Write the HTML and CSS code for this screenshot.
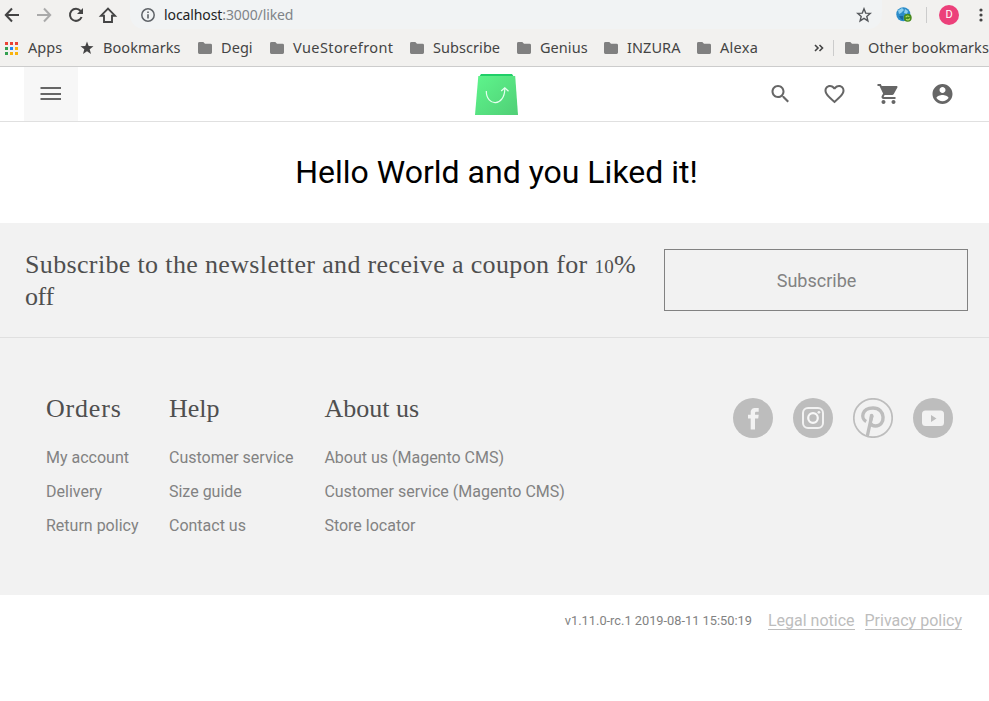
FILE: index.html
```html
<!DOCTYPE html>
<html lang="en">
<head>
<meta charset="utf-8">
<title>Liked</title>
<link rel="stylesheet" href="styles.css">
</head>
<body>
<svg class="defs" width="0" height="0"><defs>
<symbol id="folder" viewBox="0 0 14 12"><path d="M1.5 0H5.3L7 1.8H12.6Q14 1.8 14 3.2V10.6Q14 12 12.6 12H1.4Q0 12 0 10.6V1.4Q0 0 1.5 0Z" fill="#808080"/></symbol>
</defs></svg>
<div class="browser">
  <div class="toolbar">
    <svg class="nav" viewBox="0 0 120 30" fill="none" stroke="#444" stroke-width="2">
      <path d="M19 15H6M12 8.5 5.8 15 12 21.500"/>
      <path d="M37 15H50M44 8.500 50.200 15 44 21.500" stroke="#aaa"/>
      <path d="M80.600 11A6 6 0 1 0 81.600 17"/><path d="M83 8V14H77Z" fill="#444" stroke="none"/>
      <path d="M101 15.700H104V22H112V15.700H115L108 8.700Z" stroke-width="1.900"/>
    </svg>
    <div class="omnibox">
      <svg class="info" viewBox="0 0 16 16"><circle cx="8" cy="8" r="6.200" fill="none" stroke="#5f6368" stroke-width="1.500"/><path d="M8 7.200V11.500M8 4.500V6" stroke="#5f6368" stroke-width="1.600"/></svg>
      <span class="url"><b>localhost</b>:3000/liked</span>
      <svg class="star" viewBox="0 0 16 16"><path d="M8 1.800 9.700 6.100 14.300 6.400 10.800 9.400 11.900 13.900 8 11.400 4.100 13.900 5.200 9.400 1.700 6.400 6.300 6.100Z" fill="none" stroke="#55585c" stroke-width="1.400"/></svg>
    </div>
    <svg class="globe" viewBox="0 0 16 16"><circle cx="7.300" cy="7.300" r="7" fill="#2c8cc9"/><path d="M2 3.500 6 1 8 3 5 6 3 7ZM9 2 12 4 11 7 8 6Z" fill="#8ed0ef"/><path d="M3 9 7 9 7 13 5 12Z" fill="#1766a0"/><circle cx="11.700" cy="10.800" r="4" fill="#47891c"/><path d="M9.800 10.300A2 2 0 0 1 13.300 9.800M13.700 11.500A2 2 0 0 1 10.200 12.100" fill="none" stroke="#b8e36b" stroke-width="1.100"/></svg>
    <span class="rule"></span>
    <span class="avatar">D</span>
    <svg class="dots" viewBox="0 0 4 14" fill="#444"><circle cx="2" cy="2" r="1.600"/><circle cx="2" cy="7" r="1.600"/><circle cx="2" cy="12" r="1.600"/></svg>
  </div>
  <div class="bookmarks">
    <span class="bm"><svg class="apps" viewBox="0 0 13 13"><path d="M0 0h3v3H0zM5 0h3v3H5zM10 0h3v3h-3z" fill="#ea4335"/><path d="M0 5h3v3H0zM0 10h3v3H0z" fill="#34a050"/><path d="M5 5h3v3H5z" fill="#2486f5"/><path d="M10 5h3v3h-3zM5 10h3v3H5zM10 10h3v3h-3z" fill="#f9b20c"/></svg><span>Apps</span></span>
    <span class="bm"><svg class="bstar" viewBox="0 0 14 14"><path d="M7 .5 8.700 5.100 13.500 5.300 9.700 8.300 11 13 7 10.300 3 13 4.300 8.300 .5 5.300 5.300 5.100Z" fill="#444"/></svg><span>Bookmarks</span></span>
    <span class="bm"><svg><use href="#folder"/></svg><span>Degi</span></span>
    <span class="bm"><svg><use href="#folder"/></svg><span class="vue">VueStorefront</span></span>
    <span class="bm"><svg><use href="#folder"/></svg><span>Subscribe</span></span>
    <span class="bm"><svg><use href="#folder"/></svg><span>Genius</span></span>
    <span class="bm"><svg><use href="#folder"/></svg><span>INZURA</span></span>
    <span class="bm"><svg><use href="#folder"/></svg><span class="alexa">Alexa</span></span>
    <svg class="more" viewBox="0 0 10 8"><path d="M1 1 4 4 1 7M5.500 1 8.500 4 5.500 7" fill="none" stroke="#444" stroke-width="1.600"/></svg>
    <span class="rule"></span>
    <span class="bm"><svg><use href="#folder"/></svg><span>Other bookmarks</span></span>
  </div>
</div>
<header class="header">
  <button class="menu" aria-label="Menu"><svg viewBox="0 0 24 24"><path d="M1.500 6H22M1.500 12H22M1.500 17H22" stroke="#666" stroke-width="2" fill="none"/></svg></button>
  <svg class="logo" viewBox="0 0 44 42"><defs><linearGradient id="bag" x1="0" y1="0" x2="1" y2="1"><stop offset="0" stop-color="#5ef58c"/><stop offset="1" stop-color="#50cf76"/></linearGradient></defs><path d="M6 0H37L39 3H4Z" fill="#20cf68"/><path d="M3.300 2H40.200L43 41H0Z" fill="url(#bag)"/><path d="M11.300 17C11.300 33 29.800 33 29.800 14.500M26.200 17 29.800 13.700 33.500 17.200" fill="none" stroke="#e6fff0" stroke-width="1.200"/></svg>
  <nav class="actions">
    <svg viewBox="0 0 24 24"><path d="M15.500 14h-.79l-.28-.27C15.410 12.590 16 11.110 16 9.500 16 5.910 13.090 3 9.500 3S3 5.910 3 9.500 5.910 16 9.500 16c1.610 0 3.090-.59 4.230-1.570l.27.28v.79l5 4.990L20.490 19l-4.990-5zm-6 0C7.010 14 5 11.990 5 9.500S7.010 5 9.500 5 14 7.010 14 9.500 11.990 14 9.500 14z"/></svg>
    <svg viewBox="0 0 24 24"><path d="M16.500 3c-1.740 0-3.410.81-4.500 2.090C10.910 3.810 9.240 3 7.500 3 4.420 3 2 5.420 2 8.500c0 3.780 3.400 6.860 8.550 11.540L12 21.350l1.450-1.320C18.600 15.360 22 12.280 22 8.500 22 5.420 19.580 3 16.500 3zm-4.400 15.550l-.1.100-.1-.1C7.140 14.240 4 11.390 4 8.500 4 6.500 5.500 5 7.500 5c1.540 0 3.040.99 3.570 2.360h1.870C13.460 5.990 14.960 5 16.500 5c2 0 3.500 1.500 3.500 3.500 0 2.890-3.140 5.740-7.900 10.050z"/></svg>
    <svg viewBox="0 0 24 24"><path d="M7 18c-1.100 0-1.990.9-1.990 2S5.900 22 7 22s2-.9 2-2-.9-2-2-2zM1 2v2h2l3.600 7.590-1.350 2.450c-.16.280-.25.610-.25.960 0 1.100.9 2 2 2h12v-2H7.420c-.14 0-.25-.11-.25-.25l.03-.12.900-1.630h7.450c.75 0 1.410-.41 1.750-1.030l3.580-6.490c.08-.14.120-.31.120-.48 0-.55-.45-1-1-1H5.210l-.94-2H1zm16 16c-1.100 0-1.990.9-1.990 2s.89 2 1.990 2 2-.9 2-2-.9-2-2-2z"/></svg>
    <svg viewBox="0 0 24 24"><path d="M12 2C6.480 2 2 6.480 2 12s4.480 10 10 10 10-4.480 10-10S17.520 2 12 2zm0 3c1.660 0 3 1.340 3 3s-1.340 3-3 3-3-1.340-3-3 1.340-3 3-3zm0 14.200c-2.500 0-4.710-1.280-6-3.220.03-1.990 4-3.080 6-3.080 1.990 0 5.970 1.090 6 3.080-1.290 1.940-3.500 3.220-6 3.220z"/></svg>
  </nav>
</header>
<main><h1>Hello World and you Liked it!</h1></main>
<section class="newsletter">
  <h2>Subscribe to the newsletter and receive a coupon for <span class="num">10</span>% <span class="off">off</span></h2>
  <button class="subscribe">Subscribe</button>
</section>
<footer>
  <div class="links">
    <div class="col"><h3 class="orders">Orders</h3><a>My account</a><a>Delivery</a><a>Return policy</a></div>
    <div class="col help"><h3>Help</h3><a>Customer service</a><a>Size guide</a><a>Contact us</a></div>
    <div class="col"><h3>About us</h3><a>About us (Magento CMS)</a><a>Customer service (Magento CMS)</a><a>Store locator</a></div>
    <div class="social">
      <svg viewBox="0 0 40 40"><circle cx="20" cy="20" r="20" fill="#bdbdbd"/><path d="M17.700 31.500V20.500H15V16.800H17.700V14.500C17.700 11.200 19.700 10 22.300 10H25.700V13.700H23.500C22.300 13.700 22 14.200 22 15.200V16.800H25.700L25.200 20.500H22V31.500Z" fill="#f2f2f2"/></svg>
      <svg viewBox="0 0 40 40"><circle cx="20" cy="20" r="20" fill="#bdbdbd"/><rect x="10" y="10" width="20" height="20" rx="5" fill="none" stroke="#f2f2f2" stroke-width="2"/><circle cx="20" cy="20" r="4.800" fill="none" stroke="#f8f8f8" stroke-width="2.200"/><circle cx="25.900" cy="14.300" r="1.400" fill="#f2f2f2"/></svg>
      <svg viewBox="0 0 40 40"><circle cx="20" cy="20" r="19.200" fill="none" stroke="#bdbdbd" stroke-width="1.700"/><path d="M13.200 23.500C7.500 20.500 8.500 10 20 10C33 10 33 28 22.500 28C19.500 28 18 26.500 17.300 24.800M18.700 18L14.300 38" fill="none" stroke="#bdbdbd" stroke-width="3.400"/><path d="M16.900 16.500Q19.900 14.700 20.700 18L18.700 25H16Z" fill="#bdbdbd"/></svg>
      <svg viewBox="0 0 40 40"><circle cx="20" cy="20" r="20" fill="#bdbdbd"/><rect x="9" y="12.500" width="22" height="15.500" rx="3.500" fill="#f2f2f2"/><path d="M18 17V24L23.500 20.500Z" fill="#bdbdbd"/></svg>
    </div>
  </div>
</footer>
<div class="legal"><span class="version">v1.11.0-rc.1 2019-08-11 15:50:19</span><a>Legal notice</a><a>Privacy policy</a></div>
</body>
</html>
```
FILE: styles.css
```css
* { box-sizing: border-box; }
body { margin: 0; background: #fff; font-family: Roboto, sans-serif; color: #828282; overflow: hidden; height: 701px; }
h1, h2, h3 { margin: 0; font-weight: 400; }
svg { display: block; flex: none; }
.defs { position: absolute; }
.browser { height: 67px; background: #f2f1ef; border-bottom: 1px solid #ccc; font-family: "Noto Sans", sans-serif; overflow: hidden; }
.toolbar { height: 29px; display: flex; align-items: center; }
.nav { width: 120px; height: 30px; }
.omnibox { margin-left: 10px; width: 752px; height: 29px; background: #f1f3f4; border-radius: 0 0 14px 14px; display: flex; align-items: center; padding: 0 10px; }
.info, .star { width: 16px; height: 16px; }
.url { margin-left: 8px; font-size: 14px; letter-spacing: -.1px; color: #808488; }
.url b { font-weight: 400; color: #222; }
.star { margin-left: auto; }
.globe { width: 16px; height: 16px; margin-left: 14px; }
.rule { width: 1px; height: 16px; background: #ccc; }
.toolbar .rule { margin-left: 14px; }
.avatar { margin-left: 12px; width: 20px; height: 20px; border-radius: 50%; background: #ec407a; color: #fff; font: 11px/20px Roboto, sans-serif; text-align: center; }
.dots { width: 4px; height: 14px; margin-left: 20px; }
.bookmarks { height: 38px; padding-left: 5px; display: grid; grid-template-columns: 75px 118px 72px 140px 107px 87px 93px 117px 19px 12px 144px; align-items: center; color: #444; }
.bm { display: flex; align-items: center; white-space: nowrap; font-size: 14.5px; letter-spacing: .06px; line-height: 20px; }
.bm span { margin-top: -2px; }
.bm .vue { letter-spacing: .4px; }
.bm .alexa { letter-spacing: .3px; }
.bm svg { width: 14px; height: 12px; margin-right: 9px; }
.bm .apps { width: 13px; height: 13px; margin-right: 10px; }
.bm .bstar { height: 14px; }
.more { width: 10px; height: 8px; }
.header { height: 55px; border-bottom: 1px solid #e0e0e0; display: grid; grid-template-columns: 1fr 44px 1fr; align-items: center; padding: 0 35px 0 38px; }
.menu { width: 54px; height: 54px; margin-left: -14px; border: 0; background: #f7f7f7; padding: 0 0 1px; display: grid; place-items: center; }
.menu svg { width: 24px; height: 24px; }
.logo { width: 44px; height: 42px; margin: 2px 0 0 1px; }
.actions { display: flex; gap: 30px; justify-content: flex-end; }
.actions svg { width: 24px; height: 24px; fill: #666; }
.actions path { transform: translateX(.5px); }
h1 { height: 101px; padding-left: 4px; font-size: 32px; line-height: 101px; text-align: center; color: #000; }
.newsletter { height: 115px; background: #f2f2f2; border-bottom: 1px solid #e0e0e0; padding: 26px 21px 0 25px; display: flex; justify-content: space-between; align-items: flex-start; }
h2, h3 { font-family: "Liberation Serif", serif; color: #4f4f4f; font-size: 26px; line-height: 32px; }
h2 { width: 620px; letter-spacing: .35px; }
.num { font-size: 19px; line-height: 0; }
.off { letter-spacing: -.4px; }
.orders { letter-spacing: .8px; }
.subscribe { width: 304px; height: 62px; border: 1px solid #828282; background: none; color: #828282; font: 18px Roboto, sans-serif; padding: 0 0 0 1px; }
footer { height: 257px; background: #f2f2f2; padding: 55px 36px 0 46px; }
.links { display: flex; }
.col { display: flex; flex-direction: column; margin-right: 30.5px; font-size: 16px; white-space: nowrap; }
.help { margin-right: 31px; }
.col a { line-height: 20px; margin-bottom: 14px; }
.col h3 { margin-bottom: 23px; }
.social { display: flex; gap: 20px; margin: 5px 0 0 auto; }
.social svg { width: 40px; height: 40px; }
.legal { display: flex; justify-content: flex-end; align-items: center; padding: 16px 27px 0 0; color: #bdbdbd; }
.legal a { margin-left: 10px; padding-top: 1px; font-size: 16px; line-height: 17px; border-bottom: 1px solid #bdbdbd; }
.version { font-size: 12.8px; color: #828282; margin-right: 6px; }
```
